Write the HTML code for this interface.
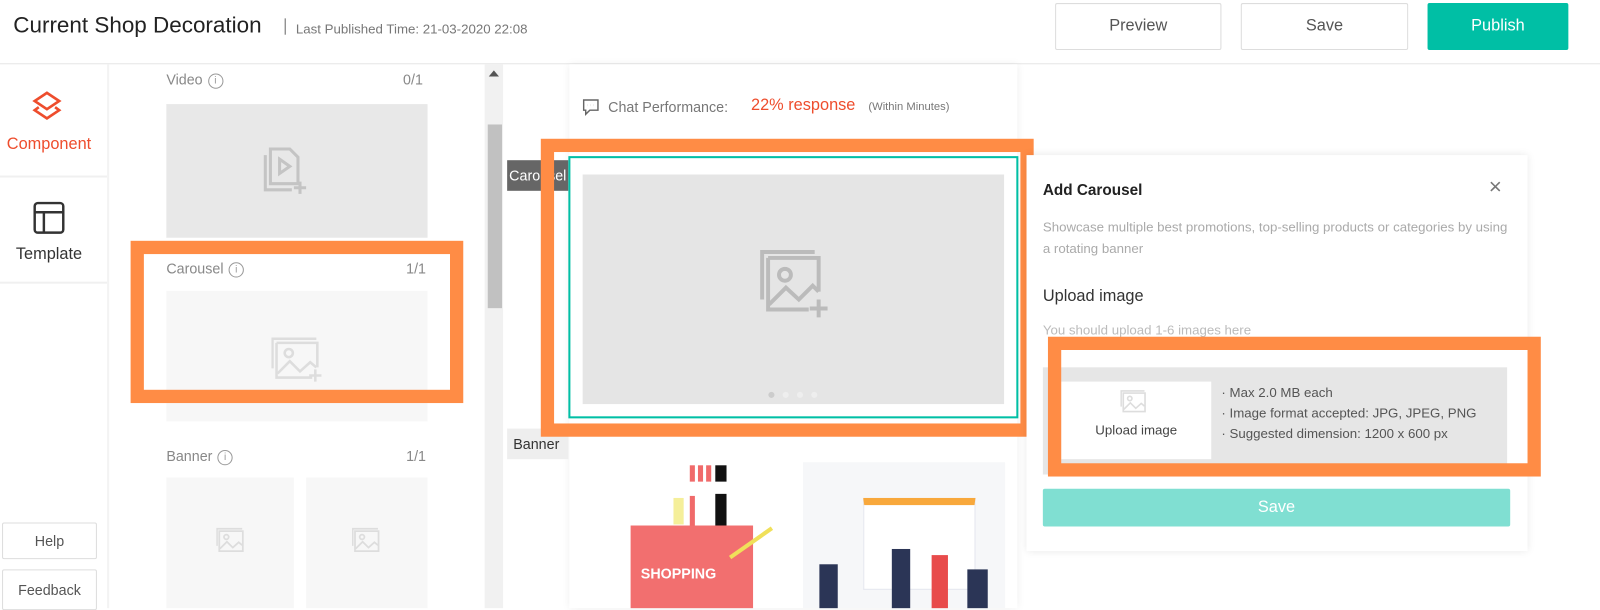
<!DOCTYPE html>
<html><head><meta charset="utf-8"><style>
*{box-sizing:border-box;margin:0;padding:0}
body{width:1600px;height:596px;overflow:hidden;background:#fff;font-family:"Liberation Sans",sans-serif;position:relative;color:#333}
#w{position:absolute;left:0;top:0;width:1568px;height:584px;transform:scale(1.0204);transform-origin:0 0}
.a{position:absolute}
.btn{position:absolute;border:1px solid #ddd;border-radius:2px;background:#fff;color:#555;font-size:16px;text-align:center;line-height:44px}
.orng{position:absolute;border:13px solid #ff8c45}
.lbl{position:absolute;font-size:14px;color:#888}
.info{display:inline-block;width:15px;height:15px;border:1px solid #999;border-radius:50%;font-size:10px;line-height:13px;text-align:center;color:#999;margin-left:5px;vertical-align:1px}
</style></head><body><div id="w">
<div class="a" style="left:13px;top:12px;font-size:22px;color:#222">Current Shop Decoration</div>
<div class="a" style="left:279px;top:18px;width:1px;height:16px;background:#666"></div>
<div class="a" style="left:290px;top:21px;font-size:13px;color:#777">Last Published Time: 21-03-2020 22:08</div>
<div class="btn" style="left:1034px;top:3px;width:163px;height:46px">Preview</div>
<div class="btn" style="left:1216px;top:3px;width:164px;height:46px">Save</div>
<div class="btn" style="left:1399px;top:3px;width:138px;height:46px;background:#00bfa5;border-color:#00bfa5;color:#fff">Publish</div>
<div class="a" style="left:0;top:62px;width:1600px;height:1px;background:#e6e6e6"></div>
<div class="a" style="left:105px;top:63px;width:2px;height:533px;background:#f3f3f3"></div>
<svg class="a" style="left:29px;top:88px" width="34" height="34" viewBox="0 0 34 34" fill="none" stroke="#ee4d2d" stroke-width="2.6"><path d="M17 3L29 11L17 19L5 11Z"/><path d="M9 17L5 20L17 28L29 20L25 17"/></svg>
<div class="a" style="left:0;top:133px;width:96px;text-align:center;font-size:16px;color:#ee4d2d">Component</div>
<div class="a" style="left:0;top:172px;width:105px;height:2px;background:#f0f0f0"></div>
<svg class="a" style="left:31px;top:197px" width="34" height="34" viewBox="0 0 34 34" fill="none" stroke="#333" stroke-width="2.4"><rect x="3" y="2" width="28" height="29" rx="3"/><path d="M3 11H31M12 11V31"/></svg>
<div class="a" style="left:0;top:241px;width:96px;text-align:center;font-size:16px;color:#333">Template</div>
<div class="a" style="left:0;top:276px;width:105px;height:2px;background:#f0f0f0"></div>
<div class="btn" style="left:2px;top:512px;width:93px;height:36px;line-height:34px;font-size:14px">Help</div>
<div class="btn" style="left:2px;top:558px;width:93px;height:40px;line-height:38px;font-size:14px">Feedback</div>
<div class="lbl" style="left:163px;top:70px">Video<span class="info">i</span></div>
<div class="lbl" style="left:395px;top:70px">0/1</div>
<div class="a" style="left:163px;top:102px;width:256px;height:131px;background:#e8e8e8"></div>
<svg class="a" style="left:252px;top:140px" width="52" height="52" viewBox="0 0 52 52" fill="none" stroke="#c4c4c4" stroke-width="3"><path d="M13 6V40H40V14L32 6Z"/><path d="M8 12V46H34"/><path d="M22 16L32 23L22 30Z"/><path d="M42 38V50M36 44H48"/></svg>
<div class="lbl" style="left:163px;top:255px">Carousel<span class="info">i</span></div>
<div class="lbl" style="left:398px;top:255px">1/1</div>
<div class="a" style="left:163px;top:285px;width:256px;height:128px;background:#f7f7f7"></div>
<svg class="a" style="left:266px;top:330px" width="52" height="45" viewBox="0 0 52 45" fill="none" stroke="#ddd" stroke-width="2.5"><path d="M1 31V2H44"/><path d="M5 6H45V30M40 40H5V6"/><circle cx="17" cy="16" r="4"/><path d="M6 36L18 24L28 34L38 25L44 30"/><path d="M43 32V44M37 38H49"/></svg>
<div class="lbl" style="left:163px;top:439px">Banner<span class="info">i</span></div>
<div class="lbl" style="left:398px;top:439px">1/1</div>
<div class="a" style="left:163px;top:468px;width:125px;height:128px;background:#f7f7f7"></div>
<div class="a" style="left:300px;top:468px;width:119px;height:128px;background:#f7f7f7"></div>
<svg class="a" style="left:212px;top:516px" width="30" height="28" viewBox="0 0 52 45" fill="none" stroke="#ddd" stroke-width="3"><path d="M1 31V2H44"/><path d="M5 6H45V40H5Z"/><circle cx="17" cy="16" r="4"/><path d="M6 36L18 24L28 34L38 25L44 30"/></svg>
<svg class="a" style="left:345px;top:516px" width="30" height="28" viewBox="0 0 52 45" fill="none" stroke="#ddd" stroke-width="3"><path d="M1 31V2H44"/><path d="M5 6H45V40H5Z"/><circle cx="17" cy="16" r="4"/><path d="M6 36L18 24L28 34L38 25L44 30"/></svg>
<div class="orng" style="left:128px;top:236px;width:326px;height:159px"></div>
<div class="a" style="left:475px;top:63px;width:18px;height:533px;background:#f1f1f1"></div>
<div class="a" style="left:479px;top:69px;width:0;height:0;border:5px solid transparent;border-bottom:6px solid #555;border-top:0"></div>
<div class="a" style="left:478px;top:122px;width:14px;height:180px;background:#c1c1c1"></div>
<div class="a" style="left:558px;top:63px;width:439px;height:533px;background:#fff;box-shadow:0 0 8px rgba(0,0,0,.08)"></div>
<svg class="a" style="left:570px;top:96px" width="18" height="18" viewBox="0 0 18 18" fill="none" stroke="#666" stroke-width="1.4"><path d="M2 2H16V12H8L4 16V12H2Z"/><path d="M6 7h.1M9 7h.1M12 7h.1" stroke-width="2"/></svg>
<div class="a" style="left:596px;top:97px;font-size:14px;color:#777">Chat Performance:</div>
<div class="a" style="left:736px;top:95px;font-size:16px;color:#ee4d2d">22% response</div>
<div class="a" style="left:851px;top:99px;font-size:11px;color:#777">(Within Minutes)</div>
<div class="a" style="left:497px;top:157px;width:60px;height:30px;background:#666;color:#fff;font-size:14px;line-height:30px;padding-left:2px">Carousel</div>
<div class="a" style="left:497px;top:420px;width:60px;height:30px;background:#eee;color:#333;font-size:14px;line-height:30px;padding-left:6px">Banner</div>
<div class="a" style="left:557px;top:153px;width:441px;height:257px;border:2px solid #00bfa5;background:#fff"></div>
<div class="a" style="left:571px;top:171px;width:413px;height:225px;background:#e5e5e5"></div>
<svg class="a" style="left:738px;top:245px" width="80" height="68" viewBox="0 0 70 70" fill="none" stroke="#bbb" stroke-width="4"><path d="M3 50V2H56"/><path d="M9 8H60V42M50 60H9V8"/><circle cx="26" cy="25" r="6"/><path d="M10 55L27 38L40 50L54 36L60 42"/><path d="M60 50V68M51 59H69"/></svg>
<div class="a" style="left:753px;top:384px;width:6px;height:6px;border-radius:50%;background:#ccc"></div>
<div class="a" style="left:767px;top:384px;width:6px;height:6px;border-radius:50%;background:#eee"></div>
<div class="a" style="left:781px;top:384px;width:6px;height:6px;border-radius:50%;background:#eee"></div>
<div class="a" style="left:795px;top:384px;width:6px;height:6px;border-radius:50%;background:#eee"></div>
<div class="orng" style="left:530px;top:136px;width:483px;height:292px"></div>
<div class="a" style="left:676px;top:456px;width:5px;height:16px;background:#f06a6a"></div>
<div class="a" style="left:684px;top:456px;width:5px;height:16px;background:#f06a6a"></div>
<div class="a" style="left:692px;top:456px;width:5px;height:16px;background:#f06a6a"></div>
<div class="a" style="left:701px;top:456px;width:11px;height:16px;background:#111"></div>
<div class="a" style="left:660px;top:488px;width:10px;height:26px;background:#f5ef9a"></div>
<div class="a" style="left:676px;top:486px;width:5px;height:30px;background:#f06a6a"></div>
<div class="a" style="left:701px;top:484px;width:11px;height:32px;background:#111"></div>
<div class="a" style="left:618px;top:515px;width:120px;height:81px;background:#f26f6f"></div>
<div class="a" style="left:628px;top:554px;font-size:14px;font-weight:bold;color:#fff">SHOPPING</div>
<div class="a" style="left:711px;top:530px;width:50px;height:4px;background:#f0e05a;transform:rotate(-35deg)"></div>
<div class="a" style="left:787px;top:453px;width:198px;height:143px;background:#f6f7f9"></div>
<div class="a" style="left:846px;top:488px;width:110px;height:90px;background:#fff;border:1px solid #e4e6ee;border-top:7px solid #f8a83c"></div>
<div class="a" style="left:803px;top:553px;width:18px;height:43px;background:#2b3556"></div>
<div class="a" style="left:874px;top:538px;width:18px;height:58px;background:#2b3556"></div>
<div class="a" style="left:913px;top:544px;width:16px;height:52px;background:#e84b4b"></div>
<div class="a" style="left:948px;top:558px;width:20px;height:38px;background:#2b3556"></div>
<div class="a" style="left:1006px;top:152px;width:491px;height:388px;background:#fff;box-shadow:0 0 8px rgba(0,0,0,.1)"></div>
<div class="a" style="left:1022px;top:178px;font-size:15px;font-weight:bold;color:#222">Add Carousel</div>
<div class="a" style="left:1459px;top:171px;font-size:22px;color:#777;line-height:24px">×</div>
<div class="a" style="left:1022px;top:212px;width:465px;font-size:13px;line-height:21px;color:#aaa">Showcase multiple best promotions, top-selling products or categories by using a rotating banner</div>
<div class="a" style="left:1022px;top:282px;font-size:16px;color:#333">Upload image</div>
<div class="a" style="left:1022px;top:316px;font-size:13px;color:#bbb">You should upload 1-6 images here</div>
<div class="a" style="left:1022px;top:360px;width:455px;height:105px;background:#e6e6e6"></div>
<div class="a" style="left:1040px;top:374px;width:147px;height:76px;background:#fff"></div>
<svg class="a" style="left:1098px;top:382px" width="28" height="24" viewBox="0 0 52 45" fill="none" stroke="#ddd" stroke-width="3"><path d="M1 31V2H44"/><path d="M5 6H45V40H5Z"/><circle cx="17" cy="16" r="4"/><path d="M6 36L18 24L28 34L38 25L44 30"/></svg>
<div class="a" style="left:1040px;top:414px;width:147px;text-align:center;font-size:13px;color:#444">Upload image</div>
<div class="a" style="left:1197px;top:375px;font-size:13px;line-height:20px;color:#555">· Max 2.0 MB each<br>· Image format accepted: JPG, JPEG, PNG<br>· Suggested dimension: 1200 x 600 px</div>
<div class="a" style="left:1022px;top:479px;width:458px;height:37px;background:#80dfd2;border-radius:2px;color:#fff;font-size:16px;text-align:center;line-height:37px">Save</div>
<div class="orng" style="left:1027px;top:330px;width:483px;height:137px"></div>
</div></body></html>
